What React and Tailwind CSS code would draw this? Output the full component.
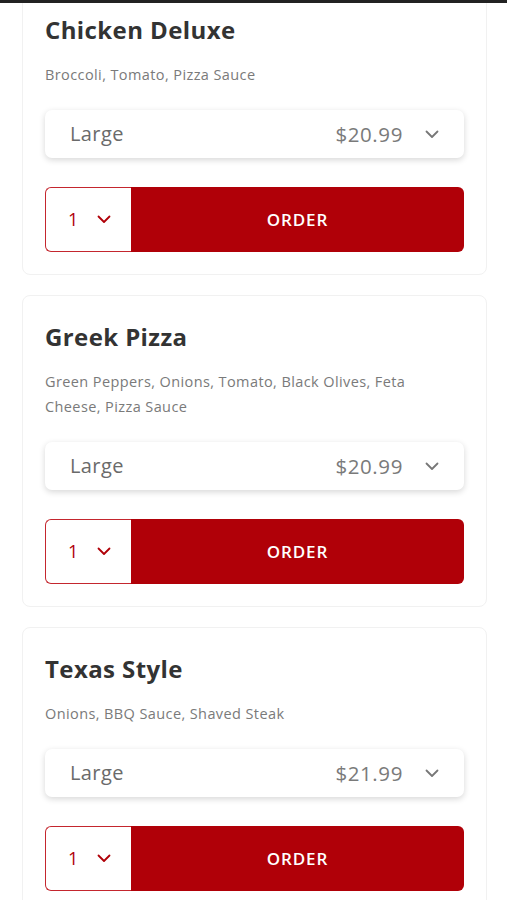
import React from "react";

const items = [
  { name: "Chicken Deluxe", desc: "Broccoli, Tomato, Pizza Sauce", size: "Large", price: "$20.99" },
  { name: "Greek Pizza", desc: "Green Peppers, Onions, Tomato, Black Olives, Feta Cheese, Pizza Sauce", size: "Large", price: "$20.99" },
  { name: "Texas Style", desc: "Onions, BBQ Sauce, Shaved Steak", size: "Large", price: "$21.99" },
];

function Chevron({ color = "#777", w = 14 }) {
  return (
    <svg width={w} height="9" viewBox="0 0 14 9" fill="none">
      <path d="M1.5 1.5L7 7l5.5-5.5" stroke={color} strokeWidth="1.8" strokeLinecap="round" strokeLinejoin="round" />
    </svg>
  );
}

function Card({ item }) {
  return (
    <div className="border border-[#f1f1f1] rounded-[8px] bg-white px-[22px] pt-[26px] pb-[22px]">
      <h2 className="text-[24px] leading-[30px] font-bold text-[#333333] tracking-[0.4px]">{item.name}</h2>
      <p className="mt-[17px] text-[14.5px] leading-[25px] text-[#7a7a7a] tracking-[0.4px]">{item.desc}</p>
      <div className="mt-[23px] h-[48px] rounded-[7px] bg-white shadow-[0_2px_6px_rgba(0,0,0,0.16)] flex items-center pl-[25px] pr-[25px]">
        <span className="text-[20px] text-[#6a6a6a] flex-1 tracking-[0.4px]">{item.size}</span>
        <span className="text-[20.5px] text-[#7a7a7a] mr-[22px] tracking-[0.6px]">{item.price}</span>
        <Chevron color="#777" />
      </div>
      <div className="mt-[29px] h-[65px] flex">
        <div className="w-[86px] border-[1.5px] border-r-0 border-[#c4262e] rounded-l-[6px] flex items-center pl-[22px] gap-[19px] bg-white">
          <span className="text-[18px] text-[#b00008] font-medium">1</span>
          <Chevron color="#b00008" />
        </div>
        <button className="flex-1 bg-[#b00008] rounded-r-[6px] text-white text-[17px] font-semibold tracking-[0.9px] flex items-center justify-center">
          ORDER
        </button>
      </div>
    </div>
  );
}

export default function App() {
  return (
    <div className="relative w-full h-[900px] overflow-hidden bg-white" style={{ fontFamily: "'Open Sans', Lato, sans-serif" }}>
      <div className="absolute top-0 left-0 right-0 h-[3px] bg-[#222] z-10" />
      <div className="-mt-[12px] pl-[22px] pr-[20px] flex flex-col gap-[20px]">
        {items.map((it) => (
          <Card key={it.name} item={it} />
        ))}
      </div>
    </div>
  );
}
